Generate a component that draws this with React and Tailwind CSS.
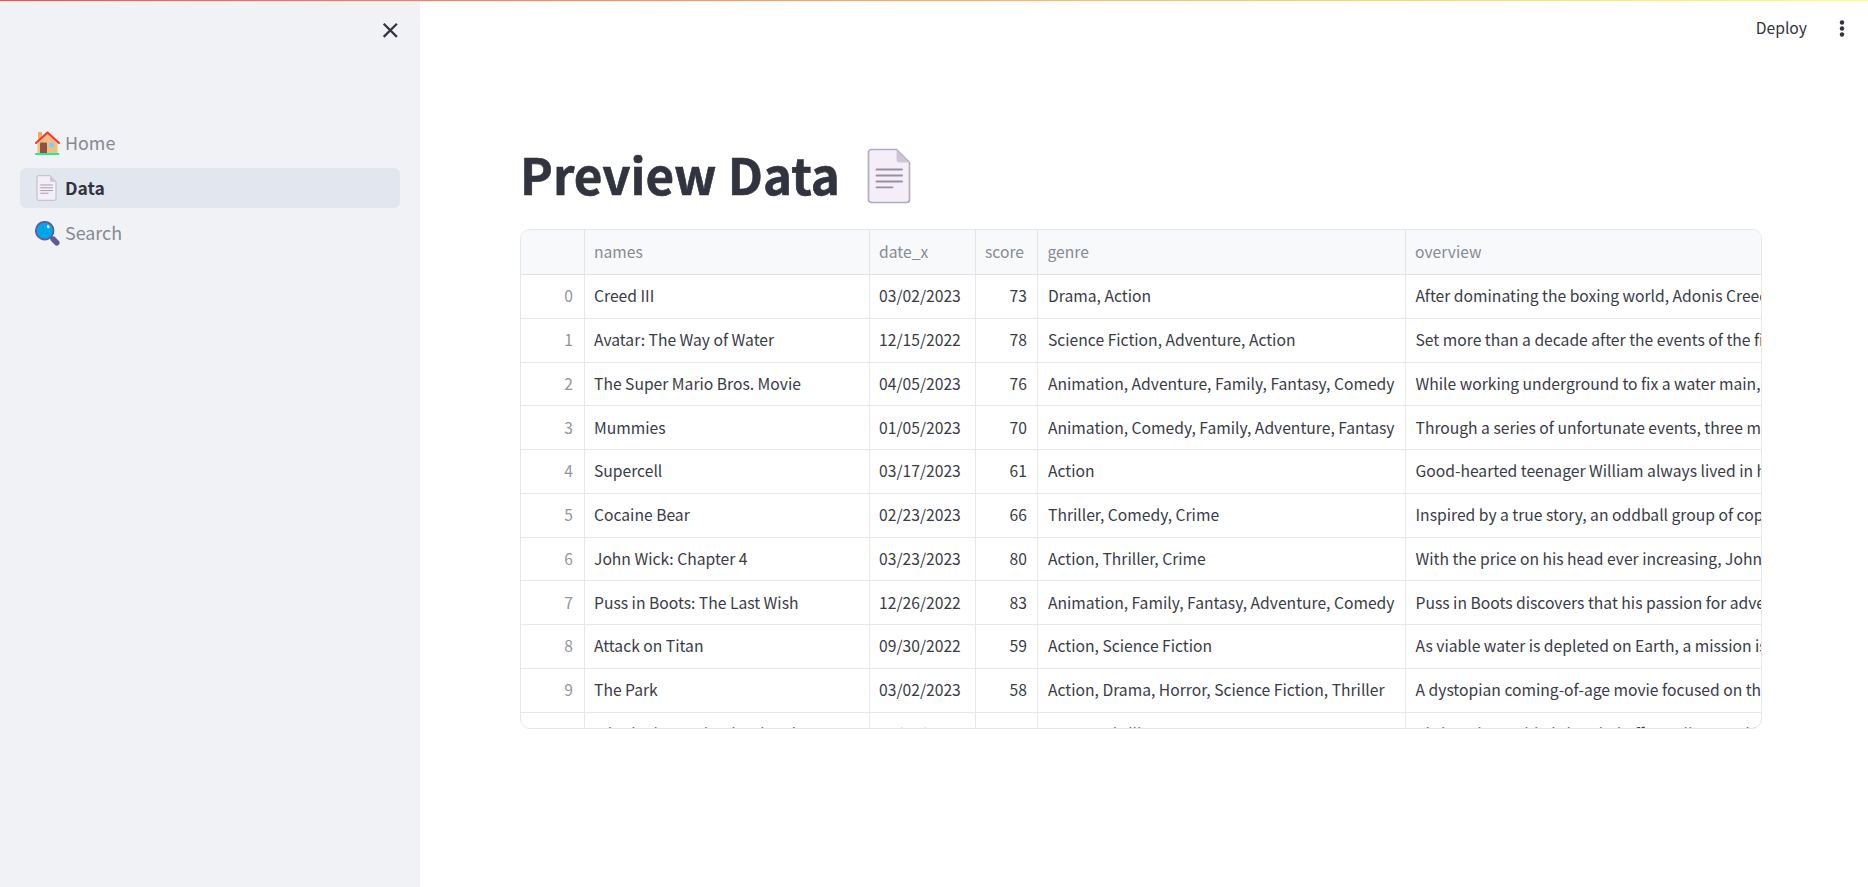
const rows = [
  ["0", "Creed III", "03/02/2023", "73", "Drama, Action", "After dominating the boxing world, Adonis Creed has been thriving"],
  ["1", "Avatar: The Way of Water", "12/15/2022", "78", "Science Fiction, Adventure, Action", "Set more than a decade after the events of the first film"],
  ["2", "The Super Mario Bros. Movie", "04/05/2023", "76", "Animation, Adventure, Family, Fantasy, Comedy", "While working underground to fix a water main, Brooklyn plumbers"],
  ["3", "Mummies", "01/05/2023", "70", "Animation, Comedy, Family, Adventure, Fantasy", "Through a series of unfortunate events, three mummies"],
  ["4", "Supercell", "03/17/2023", "61", "Action", "Good-hearted teenager William always lived in hope"],
  ["5", "Cocaine Bear", "02/23/2023", "66", "Thriller, Comedy, Crime", "Inspired by a true story, an oddball group of cops, criminals"],
  ["6", "John Wick: Chapter 4", "03/23/2023", "80", "Action, Thriller, Crime", "With the price on his head ever increasing, John Wick"],
  ["7", "Puss in Boots: The Last Wish", "12/26/2022", "83", "Animation, Family, Fantasy, Adventure, Comedy", "Puss in Boots discovers that his passion for adventure"],
  ["8", "Attack on Titan", "09/30/2022", "59", "Action, Science Fiction", "As viable water is depleted on Earth, a mission is sent"],
  ["9", "The Park", "03/02/2023", "58", "Action, Drama, Horror, Science Fiction, Thriller", "A dystopian coming-of-age movie focused on three kids"],
  ["10", "Winnie the Pooh: Blood and Honey", "01/27/2023", "58", "Horror, Thriller", "Christopher Robin is headed off to college and he has"],
];

const columns = ["", "names", "date_x", "score", "genre", "overview"];
const grid = "grid grid-cols-[64px_285px_106px_62px_368px_1fr]";
const cellPadding = [
  "justify-end pr-[11px]",
  "pl-[9px]",
  "pl-[9px]",
  "justify-end pr-[10px]",
  "pl-[10px]",
  "pl-[9.500px]",
];

function PageIcon({ className }) {
  return (
    <svg viewBox="0 0 44 56" className={className} fill="none">
      <path d="M5 1.5H29.5L42.5 14.5V51.5Q42.5 54.5 39.5 54.5H4.500Q1.500 54.5 1.500 51.5V4.500Q1.500 1.500 4.500 1.500Z" fill="#f3eef8" stroke="#b4acbc" strokeWidth="1.700" />
      <path d="M29.500 2L42 14.500H32.500Q29.500 14.500 29.500 11.500Z" fill="#cdc4d6" />
      <path d="M9.500 21.500H35M9.500 27.500H35M9.500 33.500H35M9.500 39.300H25.500" stroke="#998ea4" strokeWidth="1.800" strokeLinecap="round" />
    </svg>
  );
}

function HouseIcon() {
  return (
    <svg viewBox="0 0 25 25" className="h-[25px] w-[25px]">
      <path d="M3 1.500Q3 1 3.500 1H6.500Q7 1 7 1.500V8H3Z" fill="#f3ad61" />
      <path d="M12.500 2L22.500 12V22.500H2.500V12Z" fill="#f3c07b" />
      <rect x="5" y="11.500" width="7" height="11" rx=".8" fill="#8c5543" />
      <circle cx="10.700" cy="17" r=".6" fill="#6b3f32" />
      <rect x="14" y="11.500" width="5" height="5" rx=".6" fill="#83cbff" />
      <path d="M1 12L12.500 1.500L24 12" fill="none" stroke="#f92f33" strokeWidth="2" strokeLinecap="round" strokeLinejoin="round" />
      <rect x="0" y="22" width="24.500" height="2" rx="1" fill="#26ea98" />
    </svg>
  );
}

function SearchIcon() {
  return (
    <svg viewBox="0 0 25 25" className="h-[25px] w-[25px]">
      <path d="M15.500 15.500L18 18" stroke="#635994" strokeWidth="3" />
      <path d="M18.300 18.300L21.700 21.700" stroke="#635994" strokeWidth="5.600" strokeLinecap="round" />
      <circle cx="9.700" cy="9.700" r="8.900" fill="#00a6ed" stroke="#635994" strokeWidth="1.700" />
      <ellipse cx="13.200" cy="5.700" rx="1.300" ry="1.700" transform="rotate(-35 13.200 5.700)" fill="#fff" />
    </svg>
  );
}

function NavItem({ icon, label, active }) {
  return (
    <a className={`flex h-10 items-center rounded-md pl-[15px] ${active ? "bg-[#e2e7ef] text-[17.500px] font-bold text-[#31333f]" : "text-[17.900px] text-[#878991]"}`}>
      <span className="flex w-[25px] justify-center">{icon}</span>
      <span className="ml-[5px] leading-none">{label}</span>
    </a>
  );
}

export default function App() {
  return (
    <div className="flex h-[887px] w-[1868px] flex-col overflow-hidden bg-white font-['Noto_Sans_CJK_SC',sans-serif] text-[#31333f]">
      <div className="h-px w-full shrink-0 bg-linear-to-r from-[#ff4b4b] to-[#fffd80]" />
      <div className="flex min-h-0 flex-1">
        <aside className="w-[420px] shrink-0 bg-[#f0f2f6]">
          <div className="flex h-[122px] justify-end pt-[21px] pr-[22px]">
            <svg viewBox="0 0 16 16" className="h-4 w-4" fill="none" stroke="#31333f" strokeWidth="2.200">
              <path d="M1.700 1.700L14.900 14.900M14.900 1.700L1.700 14.900" />
            </svg>
          </div>
          <nav className="flex flex-col gap-[5px] px-5">
            <NavItem icon={<HouseIcon />} label="Home" />
            <NavItem icon={<PageIcon className="mr-[2px] h-[26px] w-[21px]" />} label="Data" active />
            <NavItem icon={<SearchIcon />} label="Search" />
          </nav>
        </aside>
        <main className="flex-1">
          <header className="flex h-[54px] items-center justify-end pr-[23px]">
            <span className="text-[15.700px] leading-none">Deploy</span>
            <svg viewBox="0 0 6 18" className="ml-[32px] h-[18px] w-[6px]" fill="#31333f">
              <circle cx="3" cy="3.500" r="2.200" />
              <circle cx="3" cy="9.500" r="2.200" />
              <circle cx="3" cy="15.500" r="2.200" />
            </svg>
          </header>
          <div className="pl-[100px]">
            <h1 className="flex h-[174px] items-center pt-[68px] text-[49.300px] leading-none font-bold">
              <span className="pb-[5px] [-webkit-text-stroke:0.6px_#31333f]">Preview Data</span>
              <PageIcon className="ml-[27px] h-14 w-11" />
            </h1>
            <div className="h-[500px] w-[1242px] overflow-hidden rounded-[10px] border border-[#e6e7ea] text-[15.670px] leading-none whitespace-nowrap">
              <div className={`${grid} h-[45px] border-b border-[#e0e1e8] bg-[#f8f9fb] text-[#888a93]`}>
                {columns.map((c, i) => (
                  <div key={i} className={`flex items-center overflow-hidden ${i === 4 ? "pl-[9.500px]" : "pl-[9px]"} ${i < 5 ? "border-r border-[#e4e5ea]" : ""}`}>{c}</div>
                ))}
              </div>
              {rows.map((r) => (
                <div key={r[0]} className={`${grid} h-[43.750px] border-b border-[#e8e8eb] text-[#393b46]`}>
                  {r.map((v, i) => (
                    <div
                      key={i}
                      className={`flex items-center overflow-hidden pb-[0.500px] ${i < 5 ? "border-r border-[#e8e8eb]" : ""} ${cellPadding[i]} ${i === 0 ? "text-[#94959c]" : ""}`}
                    >
                      {v}
                    </div>
                  ))}
                </div>
              ))}
            </div>
          </div>
        </main>
      </div>
    </div>
  );
}
